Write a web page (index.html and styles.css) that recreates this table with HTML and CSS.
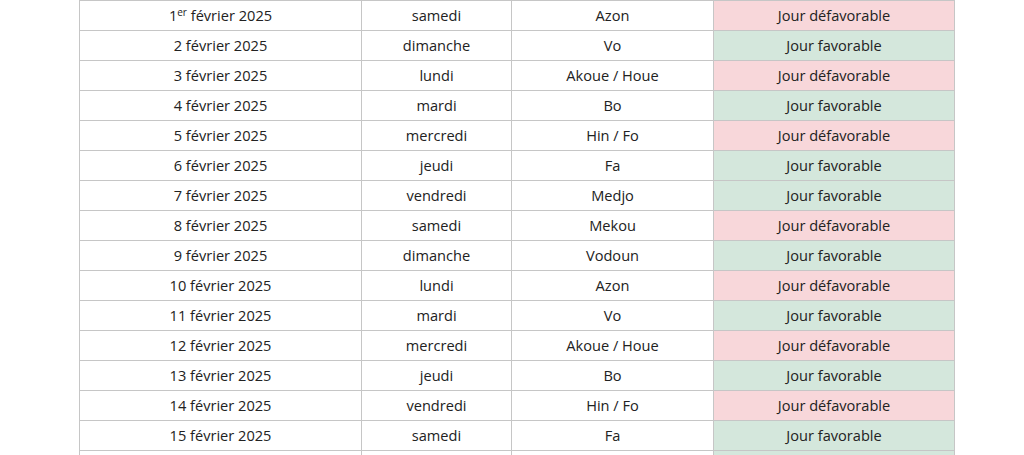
FILE: index.html
```html
<!DOCTYPE html>
<html lang="fr">
<head>
<meta charset="utf-8">
<title>Calendrier</title>
<link rel="stylesheet" href="styles.css">
</head>
<body>
<table class="cal">
<colgroup><col class="c1"><col class="c2"><col class="c3"><col class="c4"></colgroup>
<tbody>
<tr><td>1<sup>er</sup> février 2025</td><td>samedi</td><td>Azon</td><td class="bad">Jour défavorable</td></tr>
<tr><td>2 février 2025</td><td>dimanche</td><td>Vo</td><td class="good">Jour favorable</td></tr>
<tr><td>3 février 2025</td><td>lundi</td><td>Akoue / Houe</td><td class="bad">Jour défavorable</td></tr>
<tr><td>4 février 2025</td><td>mardi</td><td>Bo</td><td class="good">Jour favorable</td></tr>
<tr><td>5 février 2025</td><td>mercredi</td><td>Hin / Fo</td><td class="bad">Jour défavorable</td></tr>
<tr><td>6 février 2025</td><td>jeudi</td><td>Fa</td><td class="good">Jour favorable</td></tr>
<tr><td>7 février 2025</td><td>vendredi</td><td>Medjo</td><td class="good">Jour favorable</td></tr>
<tr><td>8 février 2025</td><td>samedi</td><td>Mekou</td><td class="bad">Jour défavorable</td></tr>
<tr><td>9 février 2025</td><td>dimanche</td><td>Vodoun</td><td class="good">Jour favorable</td></tr>
<tr><td>10 février 2025</td><td>lundi</td><td>Azon</td><td class="bad">Jour défavorable</td></tr>
<tr><td>11 février 2025</td><td>mardi</td><td>Vo</td><td class="good">Jour favorable</td></tr>
<tr><td>12 février 2025</td><td>mercredi</td><td>Akoue / Houe</td><td class="bad">Jour défavorable</td></tr>
<tr><td>13 février 2025</td><td>jeudi</td><td>Bo</td><td class="good">Jour favorable</td></tr>
<tr><td>14 février 2025</td><td>vendredi</td><td>Hin / Fo</td><td class="bad">Jour défavorable</td></tr>
<tr><td>15 février 2025</td><td>samedi</td><td>Fa</td><td class="good">Jour favorable</td></tr>
<tr><td>16 février 2025</td><td>dimanche</td><td>Medjo</td><td class="good">Jour favorable</td></tr>
</tbody>
</table>
</body>
</html>
```
FILE: styles.css
```css
html, body {
  margin: 0;
  padding: 0;
  background: #ffffff;
}
body {
  font-family: "Open Sans", "Liberation Sans", sans-serif;
  font-size: 14.6px;
  color: #222222;
}
.cal {
  border-collapse: collapse;
  table-layout: fixed;
  width: 875px;
  margin-left: 79px;
}
.c1 { width: 282px; }
.c2 { width: 150px; }
.c3 { width: 202px; }
.c4 { width: 241px; }
.cal td {
  border: 1px solid #c6c6c6;
  height: 30px;
  padding: 0 4px 2px;
  box-sizing: border-box;
  text-align: center;
  vertical-align: middle;
  line-height: 20px;
}
.cal sup {
  font-size: 10px;
  line-height: 0;
  vertical-align: 5px;
}
.cal .bad { background: #f8d7da; }
.cal .good { background: #d4e7dc; }
```
